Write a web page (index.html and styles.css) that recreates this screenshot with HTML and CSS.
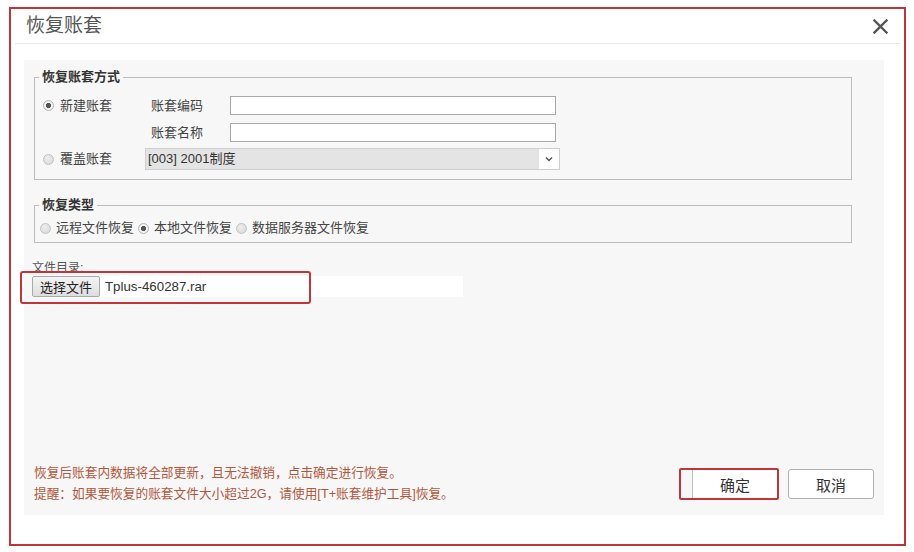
FILE: index.html
```html
<!DOCTYPE html>
<html lang="zh-CN">
<head>
    <meta charset="UTF-8">
    <meta name="viewport" content="width=device-width, initial-scale=1.0">
    <title>恢复账套</title>
    <link rel="stylesheet" href="styles.css">
</head>
<body>
    <div class="dialog">
        <div class="dialog-header">
            <span class="dialog-title">恢复账套</span>
            <svg class="close" width="15" height="15" viewBox="0 0 15 15">
                <path d="M1.5 1.5 L13.5 13.5 M13.5 1.5 L1.5 13.5" stroke="#555" stroke-width="2.4" stroke-linecap="square" fill="none"/>
            </svg>
        </div>

        <div class="panel">
            <fieldset class="group group-mode">
                <legend>恢复账套方式</legend>
                <div class="mode-grid">
                    <label class="radio-label"><input type="radio" name="mode" checked>新建账套</label>
                    <span class="field-label">账套编码</span>
                    <input class="text-input" type="text">

                    <span class="field-label second">账套名称</span>
                    <input class="text-input" type="text">

                    <label class="radio-label third"><input type="radio" name="mode">覆盖账套</label>
                    <div class="select">
                        <span class="select-text">[003] 2001制度</span>
                        <span class="select-arrow">
                            <svg width="8" height="6" viewBox="0 0 8 6">
                                <path d="M1 1.5 L4 4.5 L7 1.5" stroke="#555" stroke-width="1.5" fill="none"/>
                            </svg>
                        </span>
                    </div>
                </div>
            </fieldset>

            <fieldset class="group group-type">
                <legend>恢复类型</legend>
                <div class="type-row">
                    <label class="radio-label"><input type="radio" name="type">远程文件恢复</label>
                    <label class="radio-label"><input type="radio" name="type" checked>本地文件恢复</label>
                    <label class="radio-label"><input type="radio" name="type">数据服务器文件恢复</label>
                </div>
            </fieldset>

            <div class="file-section">
                <div class="file-label">文件目录:</div>
                <div class="file-row">
                    <button class="file-btn">选择文件</button>
                    <span class="file-name">Tplus-460287.rar</span>
                </div>
                <div class="mark mark-file"></div>
            </div>

            <div class="footer">
                <div class="notice">
                    <p>恢复后账套内数据将全部更新，且无法撤销，点击确定进行恢复。</p>
                    <p>提醒：如果要恢复的账套文件大小超过2G，请使用[T+账套维护工具]恢复。</p>
                </div>
                <div class="actions">
                    <div class="mark-ok">
                        <button class="btn btn-ok">确定</button>
                    </div>
                    <button class="btn">取消</button>
                </div>
            </div>
        </div>
    </div>
</body>
</html>
```

FILE: styles.css
```css
body {
    margin: 0;
    background-color: #fff;
    font-family: "Liberation Sans", "Noto Sans CJK SC", sans-serif;
    color: #444;
}
.dialog {
    box-sizing: border-box;
    width: 897px;
    height: 539px;
    margin: 7px 0 0 9px;
    border: 2px solid #c3343a;
    display: flex;
    flex-direction: column;
}
.dialog-header {
    height: 34px;
    margin: 0 4px;
    padding: 0 12px 0 11px;
    border-bottom: 1px solid #e8e8e8;
    display: flex;
    align-items: center;
    justify-content: space-between;
}
.dialog-title {
    font-size: 19px;
    color: #555;
    line-height: 24px;
}
.close {
    display: block;
}
.panel {
    box-sizing: border-box;
    width: 860px;
    height: 455px;
    margin: 16px 0 0 13px;
    padding: 10px 10px 10px 8px;
    background-color: #f7f7f7;
    display: flex;
    flex-direction: column;
}

/* fieldsets */
.group {
    box-sizing: border-box;
    width: 818px;
    margin: 0 0 0 2px;
    border: 1px solid #bcbcbc;
    min-width: 0;
}
.group legend {
    padding: 0 3px;
    font-size: 13px;
    font-weight: bold;
    line-height: 14px;
    color: #333;
}
.group-mode {
    padding: 12px 8px 9px 8px;
}
.group-mode legend {
    margin-left: -4px;
}
.group-type {
    margin-top: 18px;
    padding: 8px 5px 6px 5px;
}
.group-type legend {
    margin-left: -1px;
}

.mode-grid {
    display: grid;
    grid-template-columns: 102px 85px auto;
    grid-template-rows: 19px 27px 28px;
    align-items: end;
}
.radio-label {
    display: inline-flex;
    align-items: center;
    gap: 6px;
    font-size: 13px;
    line-height: 19px;
    color: #444;
}
.radio-label input {
    appearance: none;
    -webkit-appearance: none;
    width: 11px;
    height: 11px;
    margin: 0;
    border: 1px solid #c2c2c2;
    border-radius: 50%;
    background: radial-gradient(circle at 40% 35%, #eeeeee, #d6d6d6);
    box-sizing: border-box;
}
.radio-label input:checked {
    background: radial-gradient(circle, #555 0 2.3px, #f2f2f2 2.9px);
    border-color: #b4b4b4;
}
.field-label {
    padding-left: 6px;
    font-size: 13px;
    line-height: 19px;
    color: #444;
}
.second {
    grid-column: 2;
}
.third {
    grid-column: 1;
    line-height: 22px;
}
.text-input {
    box-sizing: border-box;
    width: 326px;
    height: 19px;
    margin: 0;
    border: 1px solid #a8a8a8;
    background: #fff;
}
.select {
    grid-column: 2 / 4;
    box-sizing: border-box;
    width: 415px;
    height: 22px;
    border: 1px solid #cfcfcf;
    background: #e4e4e4;
    display: flex;
}
.select-text {
    flex: 1;
    padding-left: 2px;
    font-size: 13px;
    line-height: 20px;
    color: #333;
}
.select-arrow {
    width: 20px;
    background: #fff;
    border-left: 1px solid #e2e2e2;
    display: flex;
    align-items: center;
    justify-content: center;
}

.type-row {
    display: flex;
    gap: 4px;
}
.type-row .radio-label {
    gap: 5px;
    line-height: 16px;
}

/* file chooser */
.file-section {
    position: relative;
    margin-top: 18px;
}
.file-label {
    font-size: 12px;
    line-height: 14px;
    color: #555;
}
.file-row {
    width: 431px;
    height: 21px;
    margin-top: 1px;
    background: #fff;
    display: flex;
    align-items: center;
}
.file-btn {
    box-sizing: border-box;
    width: 68px;
    height: 21px;
    margin: 0;
    padding: 0;
    border: 1px solid #a9a9a9;
    border-radius: 2px;
    background: linear-gradient(#f4f4f4, #dedede);
    font-family: inherit;
    font-size: 13px;
    color: #222;
}
.file-name {
    margin-left: 5px;
    font-size: 13.3px;
    color: #333;
}
.mark {
    position: absolute;
    box-sizing: border-box;
    border: 2px solid #c3343a;
    border-radius: 3px;
}
.mark-file {
    left: -12px;
    top: 10px;
    width: 291px;
    height: 33px;
}

/* footer */
.footer {
    margin-top: auto;
    display: flex;
    align-items: center;
    justify-content: space-between;
}
.notice {
    padding-left: 2px;
}
.notice p {
    margin: 0;
    font-size: 12.7px;
    line-height: 21px;
    color: #b4573e;
}
.actions {
    display: flex;
    align-items: center;
    gap: 9px;
}
.mark-ok {
    box-sizing: border-box;
    width: 100px;
    height: 32px;
    padding-left: 11px;
    border: 2px solid #c3343a;
    border-radius: 2px;
    display: flex;
}
.btn {
    box-sizing: border-box;
    width: 86px;
    height: 30px;
    margin: 0;
    border: 1px solid #b0b0b0;
    border-radius: 3px;
    background: #fff;
    font-family: inherit;
    font-size: 15px;
    color: #333;
}
.btn-ok {
    width: 85px;
    height: 28px;
    border: none;
    border-left: 1px solid #bdbdbd;
    border-radius: 0;
}
```
